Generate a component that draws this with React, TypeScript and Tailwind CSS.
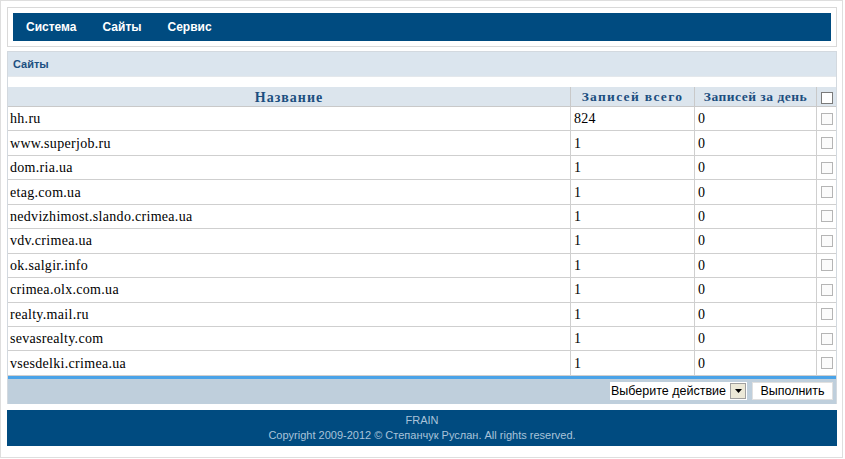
import React from "react";

const sites = [
  { name: "hh.ru", total: "824", day: "0" },
  { name: "www.superjob.ru", total: "1", day: "0" },
  { name: "dom.ria.ua", total: "1", day: "0" },
  { name: "etag.com.ua", total: "1", day: "0" },
  { name: "nedvizhimost.slando.crimea.ua", total: "1", day: "0" },
  { name: "vdv.crimea.ua", total: "1", day: "0" },
  { name: "ok.salgir.info", total: "1", day: "0" },
  { name: "crimea.olx.com.ua", total: "1", day: "0" },
  { name: "realty.mail.ru", total: "1", day: "0" },
  { name: "sevasrealty.com", total: "1", day: "0" },
  { name: "vsesdelki.crimea.ua", total: "1", day: "0" },
];

function Check({ dark }: { dark?: boolean }) {
  return (
    <span
      className={
        dark
          ? "block w-[12px] h-[12px] border border-[#7a7a7a] bg-white"
          : "block w-[12px] h-[12px] border border-[#b5b5b5] bg-[#fbfbfb]"
      }
    />
  );
}

export default function App() {
  return (
    <div className="w-[843px] h-[458px] border border-[#dedede] bg-white pl-[6px] pt-[6px] font-['Liberation_Sans',Arial,sans-serif]">
      {/* ШАПКА */}
      <div className="w-[830px] border border-[#d9d9d9] p-[5px]">
        <nav className="h-[28px] bg-[#004b80] flex items-center gap-[26px] px-[13px] text-white text-[12px] font-bold">
          <span>Система</span>
          <span>Сайты</span>
          <span>Сервис</span>
        </nav>
      </div>

      {/* ПАНЕЛЬ САЙТОВ */}
      <div className="w-[830px] mt-[4px] border-x border-t border-[#d3d9df]">
        <div className="h-[24px] bg-[#dbe5ee] flex items-center px-[5px] text-[11px] font-bold text-[#1c4f80]">
          Сайты
        </div>
        <div className="h-[11px] border-t border-[#e4e8ec] bg-white" />

        <div className="grid grid-cols-[562px_124px_122px_20px] h-[20px] bg-[#dce5ed] border-b border-[#c9c9c9] font-['Liberation_Serif',serif] text-[14px] font-bold tracking-[1px] text-[#1c4f80]">
          <div className="flex items-center justify-center">Название</div>
          <div className="flex items-center justify-center border-l border-[#c9c9c9] text-[13.5px] tracking-[1.3px]">Записей всего</div>
          <div className="flex items-center justify-center border-l border-[#c9c9c9] text-[13.5px] tracking-[0.5px]">Записей за день</div>
          <div className="flex items-center justify-center border-l border-[#c9c9c9]">
            <Check dark />
          </div>
        </div>

        {sites.map((s, i) => (
          <div
            key={i}
            className="grid grid-cols-[562px_124px_122px_20px] h-[24.45px] border-b border-[#cfcfcf] last:border-b-0 font-['Liberation_Serif',serif] text-[14px] tracking-[0.3px] text-black"
          >
            <div className="flex items-center pl-[2px]">{s.name}</div>
            <div className="flex items-center pl-[3px] border-l border-[#cfcfcf]">{s.total}</div>
            <div className="flex items-center pl-[3px] border-l border-[#cfcfcf]">{s.day}</div>
            <div className="flex items-center justify-center border-l border-[#cfcfcf]">
              <Check />
            </div>
          </div>
        ))}

        <div className="h-[3px] bg-[#4aa3e8]" />
        <div className="h-[25px] bg-[#bfcfdc] flex items-center justify-end gap-[5px] pr-[3px] text-[12.5px] text-black whitespace-nowrap">
          <div className="h-[18px] w-[137px] bg-white flex items-center justify-between pl-[1px] pr-[1px]">
            <span>Выберите действие</span>
            <span className="w-[16px] h-[16px] bg-[#ece9d8] border border-[#a0a0a0] flex items-center justify-center">
              <svg width="7" height="4" viewBox="0 0 7 4">
                <path d="M0 0h7L3.5 4z" fill="#000" />
              </svg>
            </span>
          </div>
          <div className="h-[18px] w-[81px] bg-white border border-[#e0e0e0] flex items-center justify-center">
            Выполнить
          </div>
        </div>
      </div>

      {/* ПОДВАЛ */}
      <footer className="w-[830px] h-[36px] mt-[6px] bg-[#004b80] flex flex-col items-center justify-center text-[11px] leading-[15px] text-[#a9c3da]">
        <span>FRAIN</span>
        <span>Copyright 2009-2012 © Степанчук Руслан. All rights reserved.</span>
      </footer>
    </div>
  );
}
